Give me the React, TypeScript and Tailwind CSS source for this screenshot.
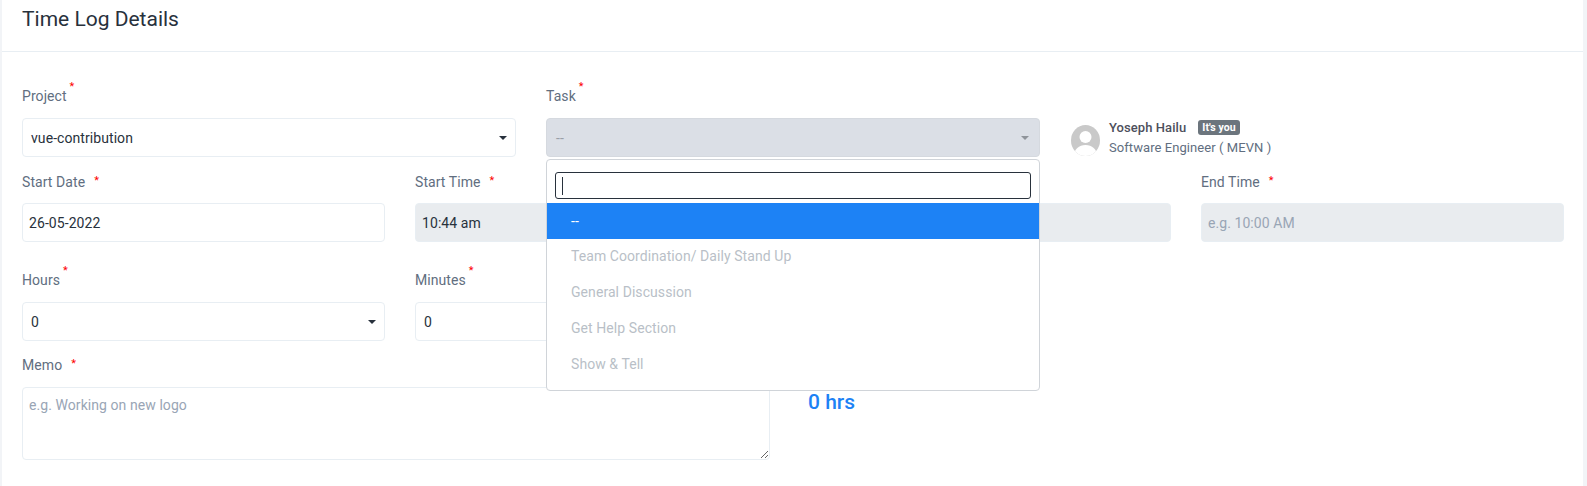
const font = { fontFamily: 'Roboto, "Liberation Sans", sans-serif' }

const OPTIONS = ['Team Coordination/ Daily Stand Up', 'General Discussion', 'Get Help Section', 'Show & Tell']

function Label({ text, raised }: { text: string; raised?: boolean }) {
  return (
    <div className="flex h-[21px] items-center text-sm text-[#616e80]">
      <span>{text}</span>
      <span
        className={`text-[11px] leading-none text-[#fd0000] ${raised ? 'ml-[3px] -translate-y-[9px]' : 'ml-[9px] -translate-y-[1px]'}`}
      >
        *
      </span>
    </div>
  )
}

function Caret({ muted }: { muted?: boolean }) {
  return (
    <svg width="8" height="4" viewBox="0 0 8 4" className="shrink-0">
      <path d="M0 0h8L4 4z" fill={muted ? '#8f949a' : '#28313c'} />
    </svg>
  )
}

function SelectBox({ value }: { value: string }) {
  return (
    <div className="flex h-[39px] items-center justify-between rounded border border-[#e8eef3] bg-white pl-[8px] pr-[8px] text-sm text-[#28313c]">
      <span>{value}</span>
      <Caret />
    </div>
  )
}

function TextBox({ value, placeholder, disabled }: { value?: string; placeholder?: string; disabled?: boolean }) {
  return (
    <input
      readOnly
      value={value}
      placeholder={placeholder}
      className={`block h-[39px] w-full rounded border border-[#e8eef3] px-[6px] text-sm tracking-[0.07px] text-[#28313c] outline-none placeholder:text-[#99a5b5] ${disabled ? 'bg-[#e9ecef]' : 'bg-white'}`}
    />
  )
}

function UserCard() {
  return (
    <div className="ml-[31px] flex items-center gap-[9px] pt-[33px]">
      <svg width="29" height="31" viewBox="0 0 29 31" className="mt-[6px] shrink-0">
        <defs>
          <clipPath id="avatar">
            <ellipse cx="14.5" cy="15.5" rx="14.5" ry="15.5" />
          </clipPath>
        </defs>
        <g clipPath="url(#avatar)">
          <rect width="29" height="31" fill="#c9c9c9" />
          <circle cx="14.5" cy="12" r="6" fill="#fff" />
          <path d="M3 31c0-7 5-11 11.500-11S26 24 26 31z" fill="#fff" />
        </g>
      </svg>
      <div className="flex flex-col">
        <div className="flex items-center">
          <span className="text-[13px] font-medium leading-[15px] text-[#4d4f5c]">Yoseph Hailu</span>
          <span className="ml-[12px] rounded-[3px] bg-[#6c757d] px-[4px] text-[10.5px] font-bold leading-[15px] text-white">It's you</span>
        </div>
        <span className="mt-[5px] text-[13px] leading-[15px] text-[#616e80]">Software Engineer ( MEVN )</span>
      </div>
    </div>
  )
}

function TaskMenu() {
  return (
    <div className="absolute left-0 right-0 top-[41px] z-10 h-[232px] rounded border border-[#d0d4d9] bg-white">
      <div className="px-[8px] pt-[12px]">
        <div className="flex h-[27px] items-center rounded-[3px] border border-[#28313c] pl-[6px]">
          <div className="h-[18px] w-px bg-[#28313c]" />
        </div>
      </div>
      <div className="mt-[4px] flex h-[36px] items-center bg-[#1d82f5] pl-[24px] text-sm text-white">--</div>
      <div className="-mt-[1px]">
        {OPTIONS.map((o) => (
          <div key={o} className="flex h-[36px] items-center pl-[24px] text-sm text-[#b9bfc7]">
            {o}
          </div>
        ))}
      </div>
    </div>
  )
}

export default function App() {
  return (
    <div className="h-[486px] overflow-hidden bg-[#f2f4f7] pl-[2px] pr-[4px] tracking-[0.07px]" style={font}>
      <div className="h-full bg-white">
        <div className="h-[52px] border-b border-[#e8eef3] pl-[20px] pt-[5px]">
          <h1 className="text-[21px] leading-[28px] tracking-normal text-[#28313c]">Time Log Details</h1>
        </div>

        <div className="px-[20px] pt-[33px]">
          <div className="flex">
            <div className="w-[494px]">
              <Label text="Project" raised />
              <div className="mt-[12px]">
                <SelectBox value="vue-contribution" />
              </div>
            </div>
            <div className="relative ml-[30px] w-[494px]">
              <Label text="Task" raised />
              <div className="relative mt-[12px]">
                <div className="flex h-[39px] items-center justify-between rounded border border-[#d5d9df] bg-[#dbdfe6] pl-[9px] pr-[10px] text-sm text-[#9aa0a8]">
                  <span>--</span>
                  <Caret muted />
                </div>
                <TaskMenu />
              </div>
            </div>
            <UserCard />
          </div>

          <div className="mt-[14px] grid grid-cols-[363px_363px_363px_363px] gap-x-[30px]">
            <div>
              <Label text="Start Date" />
              <div className="mt-[11px]">
                <TextBox value="26-05-2022" />
              </div>
            </div>
            <div>
              <Label text="Start Time" />
              <div className="mt-[11px]">
                <TextBox value="10:44 am" disabled />
              </div>
            </div>
            <div>
              <Label text="End Date" />
              <div className="mt-[11px]">
                <TextBox disabled />
              </div>
            </div>
            <div>
              <Label text="End Time" />
              <div className="mt-[11px]">
                <TextBox placeholder="e.g. 10:00 AM" disabled />
              </div>
            </div>
          </div>

          <div className="mt-[27px] grid grid-cols-[363px_363px] gap-x-[30px]">
            <div>
              <Label text="Hours" raised />
              <div className="mt-[12px]">
                <SelectBox value="0" />
              </div>
            </div>
            <div>
              <Label text="Minutes" raised />
              <div className="mt-[12px]">
                <SelectBox value="0" />
              </div>
            </div>
          </div>

          <div className="mt-[13px] flex">
            <div className="w-[748px]">
              <Label text="Memo" />
              <textarea
                readOnly
                placeholder="e.g. Working on new logo"
                className="mt-[12px] block h-[73px] w-full rounded border border-[#e8eef3] px-[6px] py-[7px] text-sm tracking-[0.07px] text-[#28313c] outline-none placeholder:text-[#99a5b5]"
              />
            </div>
            <div className="ml-[38px] pt-[34px] text-[21px] font-medium leading-[28px] tracking-normal text-[#1d82f5]">0 hrs</div>
          </div>
        </div>
      </div>
    </div>
  )
}
